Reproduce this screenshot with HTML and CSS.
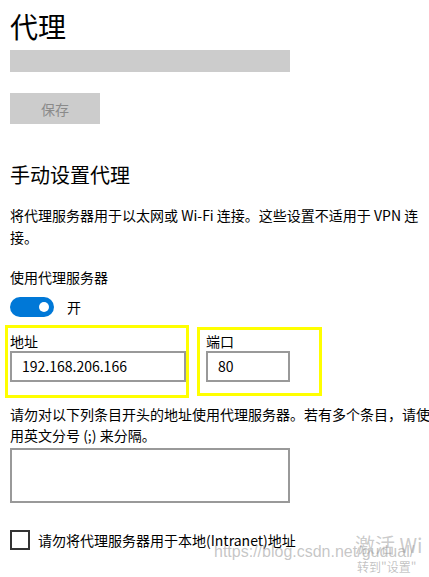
FILE: index.html
```html
<!DOCTYPE html>
<html lang="zh-CN">
<head>
<meta charset="utf-8">
<title>代理</title>
<link rel="stylesheet" href="styles.css">
</head>
<body>
<div class="page">
  <h1 class="title">代理</h1>
  <div class="bar"></div>
  <button class="save" type="button">保存</button>
  <h2 class="section">手动设置代理</h2>
  <p class="desc">将代理服务器用于以太网或 Wi-Fi 连接。这些设置不适用于 VPN 连接。</p>
  <div class="label">使用代理服务器</div>
  <div class="toggle-row">
    <span class="toggle"><span class="thumb"></span></span>
    <span class="toggle-text">开</span>
  </div>
  <div class="fields">
    <div class="field field-addr">
      <div class="field-label">地址</div>
      <div class="input">192.168.206.166</div>
      <span class="mark mark-addr"></span>
    </div>
    <div class="field field-port">
      <div class="field-label">端口</div>
      <div class="input">80</div>
      <span class="mark mark-port"></span>
    </div>
  </div>
  <p class="desc desc2">请勿对以下列条目开头的地址使用代理服务器。若有多个条目，请使用英文分号 (;) 来分隔。</p>
  <div class="textarea"></div>
  <div class="check-row">
    <span class="checkbox"></span>
    <span class="check-text">请勿将代理服务器用于本地(Intranet)地址</span>
  </div>
</div>
<div class="wm-activate">激活 Wi</div>
<div class="wm-url">https://blog.csdn.net/gudual/</div>
<div class="wm-goto">转到"设置"</div>
</body>
</html>
```

FILE: styles.css
```css
html, body {
  margin: 0;
  padding: 0;
  background: #fff;
  overflow: hidden;
}
body {
  width: 429px;
  height: 577px;
  position: relative;
  font-family: "Noto Sans CJK SC", "Noto Sans", sans-serif;
  color: #000;
}
.page {
  padding-left: 10px;
  width: 420px;
}
.title {
  margin: 8px 0 0;
  font-size: 28px;
  line-height: 36px;
  font-weight: normal;
}
.bar {
  margin-top: 6px;
  width: 280px;
  height: 22px;
  background: #cccccc;
}
.save {
  display: block;
  margin-top: 21px;
  width: 90px;
  height: 31px;
  border: none;
  padding: 0;
  background: #cccccc;
  color: #8a8a8a;
  font-family: inherit;
  font-size: 14px;
}
.section {
  margin: 37px 0 0;
  font-size: 20px;
  line-height: 28px;
  font-weight: normal;
}
.desc {
  margin: 16px 0 0;
  font-size: 14px;
  line-height: 21.5px;
}
.label {
  margin-top: 18px;
  font-size: 14px;
  line-height: 22px;
}
.toggle-row {
  margin-top: 9px;
  display: flex;
  align-items: center;
  gap: 13px;
  height: 20px;
}
.toggle {
  width: 44px;
  height: 20px;
  border-radius: 10px;
  background: #0078d7;
  display: flex;
  align-items: center;
  justify-content: flex-end;
  padding-right: 5px;
  box-sizing: border-box;
}
.thumb {
  width: 10px;
  height: 10px;
  border-radius: 50%;
  background: #fff;
}
.toggle-text {
  font-size: 14px;
  line-height: 20px;
}
.fields {
  margin-top: 15px;
  display: flex;
  gap: 20px;
}
.field {
  position: relative;
}
.field-label {
  font-size: 14px;
  line-height: 19px;
}
.input {
  box-sizing: border-box;
  height: 31px;
  border: 2px solid #999;
  padding-left: 10px;
  font-size: 14px;
  line-height: 27px;
}
.field-addr .input { width: 176px; }
.field-port .input { width: 84px; }
.mark {
  position: absolute;
  border: 3px solid #ffff00;
  box-sizing: border-box;
}
.mark-addr {
  left: -5px;
  top: -7px;
  width: 184px;
  height: 73px;
}
.mark-port {
  left: -9px;
  top: -5px;
  width: 125px;
  height: 69px;
}
.desc2 {
  margin-top: 22px;
  line-height: 21px;
  width: 422px;
}
.textarea {
  margin-top: 2px;
  box-sizing: border-box;
  width: 280px;
  height: 55px;
  border: 2px solid #999;
}
.check-row {
  margin-top: 27px;
  display: flex;
  align-items: center;
  gap: 8px;
}
.checkbox {
  box-sizing: border-box;
  width: 20px;
  height: 20px;
  border: 2px solid #333;
}
.check-text {
  font-size: 14px;
  line-height: 20px;
}
.wm-activate {
  position: absolute;
  left: 355px;
  top: 532px;
  font-size: 20px;
  line-height: 26px;
  color: rgba(120, 120, 120, 0.4);
  white-space: nowrap;
}
.wm-url {
  position: absolute;
  left: 214px;
  top: 543px;
  font-family: "Liberation Sans", Arial, sans-serif;
  font-size: 16px;
  line-height: 18px;
  color: rgba(150, 150, 150, 0.55);
  white-space: nowrap;
}
.wm-goto {
  position: absolute;
  left: 357px;
  top: 559px;
  font-size: 12px;
  line-height: 16px;
  color: rgba(120, 120, 120, 0.45);
  white-space: nowrap;
}
```
